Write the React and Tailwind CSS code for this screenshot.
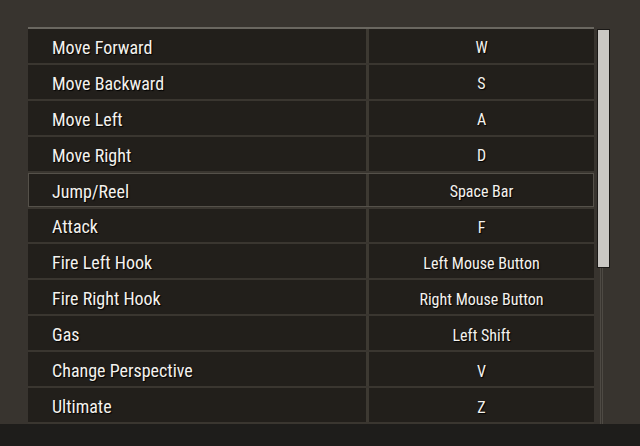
import React from "react";

const binds = [
  ["Move Forward", "W"],
  ["Move Backward", "S"],
  ["Move Left", "A"],
  ["Move Right", "D"],
  ["Jump/Reel", "Space Bar"],
  ["Attack", "F"],
  ["Fire Left Hook", "Left Mouse Button"],
  ["Fire Right Hook", "Right Mouse Button"],
  ["Gas", "Left Shift"],
  ["Change Perspective", "V"],
  ["Ultimate", "Z"],
];

const Row = ({ action, keyName, active }) => (
  <div
    className={
      "flex h-[34px] mb-[2px] " +
      (active ? "outline outline-1 outline-[#55514a] -outline-offset-1 bg-[#2a2723]" : "")
    }
  >
    <div className="w-[338px] flex items-center pl-6 pt-[3px] bg-[#221f1b] text-[18px] text-[#f4f2ee] [text-shadow:1px_1px_1px_#000]">
      {action}
    </div>
    <div className="w-[3px] bg-[#3d3932]" />
    <div className="flex-1 flex items-center justify-center pt-[5px] bg-[#221f1b] text-[16px] text-[#f4f2ee] [text-shadow:1px_1px_1px_#000]">
      {keyName}
    </div>
  </div>
);

const App = () => {
  return (
    <div className="w-[640px] h-[446px] bg-[#38342f] flex flex-col overflow-hidden font-['Liberation_Sans_Narrow','Roboto_Condensed','DejaVu_Sans_Condensed',sans-serif] [font-stretch:condensed]">
      <div className="flex h-[424px] pt-[27px] pl-[28px]">
        <div className="w-[566px] flex flex-col border-t-2 border-[#6a6760] bg-[#3a3630]">
          {binds.map((b, i) => (
            <Row key={i} action={b[0]} keyName={b[1]} active={i === 4} />
          ))}
        </div>
        <div className="ml-[3px] w-[13px] relative">
          <div className="absolute left-[3px] top-[30px] bottom-0 w-[3px] border-x border-[#4e4a44]" />
          <div className="relative mt-[2px] h-[239px] w-[13px] bg-[#c9c7c3] border border-[#1a1816]" />
        </div>
      </div>
      <div className="flex-1 bg-[#1e1d1b]" />
    </div>
  );
};

export default App;
